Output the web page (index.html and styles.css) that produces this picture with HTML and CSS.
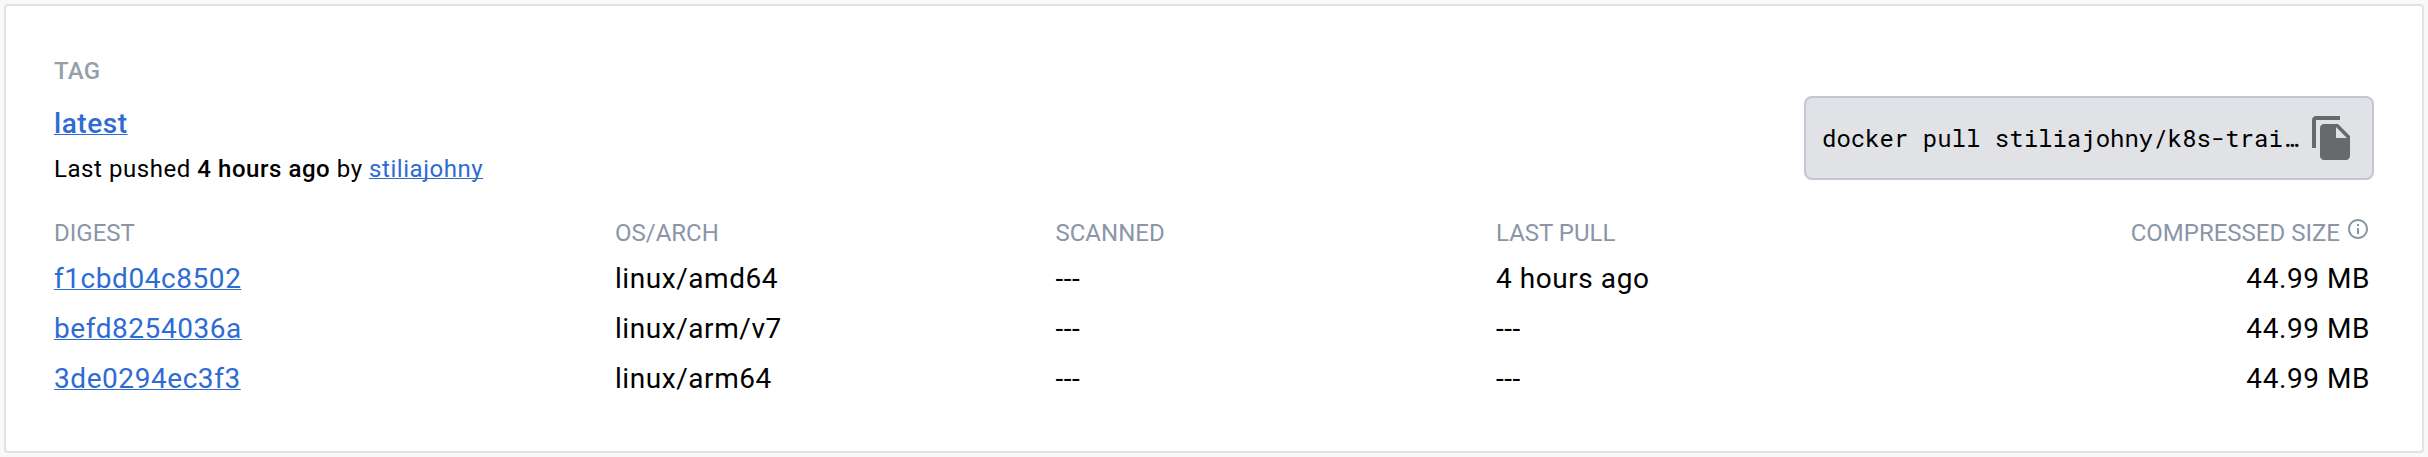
FILE: index.html
```html
<!DOCTYPE html>
<html lang="en">
<head>
<meta charset="utf-8">
<title>Tags</title>
<link rel="stylesheet" href="styles.css">
</head>
<body>
<main class="card">
  <header class="tag-header">
    <div class="tag-info">
      <div class="tag-label">TAG</div>
      <a class="tag-name" href="#">latest</a>
      <div class="pushed">Last pushed <strong>4 hours ago</strong> by <a href="#">stiliajohny</a></div>
    </div>
    <div class="command">
      <code class="command-text">docker pull stiliajohny/k8s-trai…</code>
      <svg class="copy-icon" viewBox="0 0 24 24"><path d="M16 1H4c-1.1 0-2 .9-2 2v14h2V3h12V1zm-1 4l6 6v10c0 1.1-.9 2-2 2H7.99C6.89 23 6 22.1 6 21l.01-14c0-1.1.89-2 1.99-2h7zm-1 7h5.5L14 6.5V12z"/></svg>
    </div>
  </header>
  <section class="table">
    <div class="row head">
      <span>DIGEST</span><span>OS/ARCH</span><span>SCANNED</span><span>LAST PULL</span>
      <span class="size">COMPRESSED SIZE<svg class="info-icon" viewBox="0 0 24 24"><path d="M11 17h2v-6h-2v6zm1-15C6.48 2 2 6.48 2 12s4.48 10 10 10 10-4.48 10-10S17.52 2 12 2zm0 18c-4.41 0-8-3.59-8-8s3.59-8 8-8 8 3.59 8 8-3.59 8-8 8zM11 9h2V7h-2v2z"/></svg></span>
    </div>
    <div class="row"><a href="#">f1cbd04c8502</a><span>linux/amd64</span><span>---</span><span>4 hours ago</span><span class="size">44.99 MB</span></div>
    <div class="row"><a href="#">befd8254036a</a><span>linux/arm/v7</span><span>---</span><span>---</span><span class="size">44.99 MB</span></div>
    <div class="row"><a href="#">3de0294ec3f3</a><span>linux/arm64</span><span>---</span><span>---</span><span class="size">44.99 MB</span></div>
  </section>
</main>
</body>
</html>
```
FILE: styles.css
```css
* {
  box-sizing: border-box;
}

body {
  margin: 0;
  padding: 4px;
  height: 457px;
  background: #f9f9f9;
  color: #000;
  font-family: Roboto, "Liberation Sans", sans-serif;
}

a {
  color: #2e6bd3;
  text-decoration: underline;
  text-decoration-thickness: 1px;
  text-underline-offset: 1px;
  text-decoration-skip-ink: none;
}

.card {
  width: 2420px;
  height: 449px;
  padding: 48px;
  border: 2px solid #e1e2e6;
  border-radius: 4px;
  background: #fff;
}

.tag-header {
  display: flex;
  justify-content: space-between;
}

.tag-info {
  display: flex;
  flex-direction: column;
  align-items: flex-start;
}

.tag-label {
  height: 32px;
  margin-top: 1px;
  line-height: 32px;
  font-size: 24px;
  font-weight: 500;
  letter-spacing: 0.3px;
  color: #94a0aa;
}

.tag-name {
  height: 40px;
  margin-top: 17px;
  line-height: 40px;
  font-size: 28px;
  font-weight: 500;
  letter-spacing: 0.56px;
}

.pushed {
  height: 40px;
  margin-top: 5px;
  line-height: 40px;
  font-size: 24px;
  letter-spacing: 0.55px;
}

.pushed strong {
  font-weight: 500;
}

.command {
  display: flex;
  align-items: center;
  width: 570px;
  height: 84px;
  margin-top: 42px;
  padding: 0 16px;
  border: 2px solid #c4c7d3;
  border-radius: 8px;
  background: #e1e2e6;
}

.command-text {
  flex: 1;
  white-space: nowrap;
  font-family: "Roboto Mono", "DejaVu Sans Mono", monospace;
  font-size: 24px;
}

.copy-icon {
  flex: none;
  width: 48px;
  height: 48px;
  fill: #68696b;
}

.table {
  margin-top: 22px;
  padding-right: 4px;
}

.row {
  display: grid;
  grid-template-columns: 561px 440.5px 440.5px 1fr auto;
  justify-items: start;
  height: 50px;
  line-height: 50px;
  font-size: 28px;
  letter-spacing: 0.56px;
}

.head {
  height: 43px;
  line-height: 44px;
  font-size: 24px;
  letter-spacing: 0;
  color: #8b95a7;
}

.size {
  justify-self: end;
}

.info-icon {
  width: 24px;
  height: 24px;
  margin-left: 6px;
  vertical-align: 0;
  fill: #8797a0;
}
```
